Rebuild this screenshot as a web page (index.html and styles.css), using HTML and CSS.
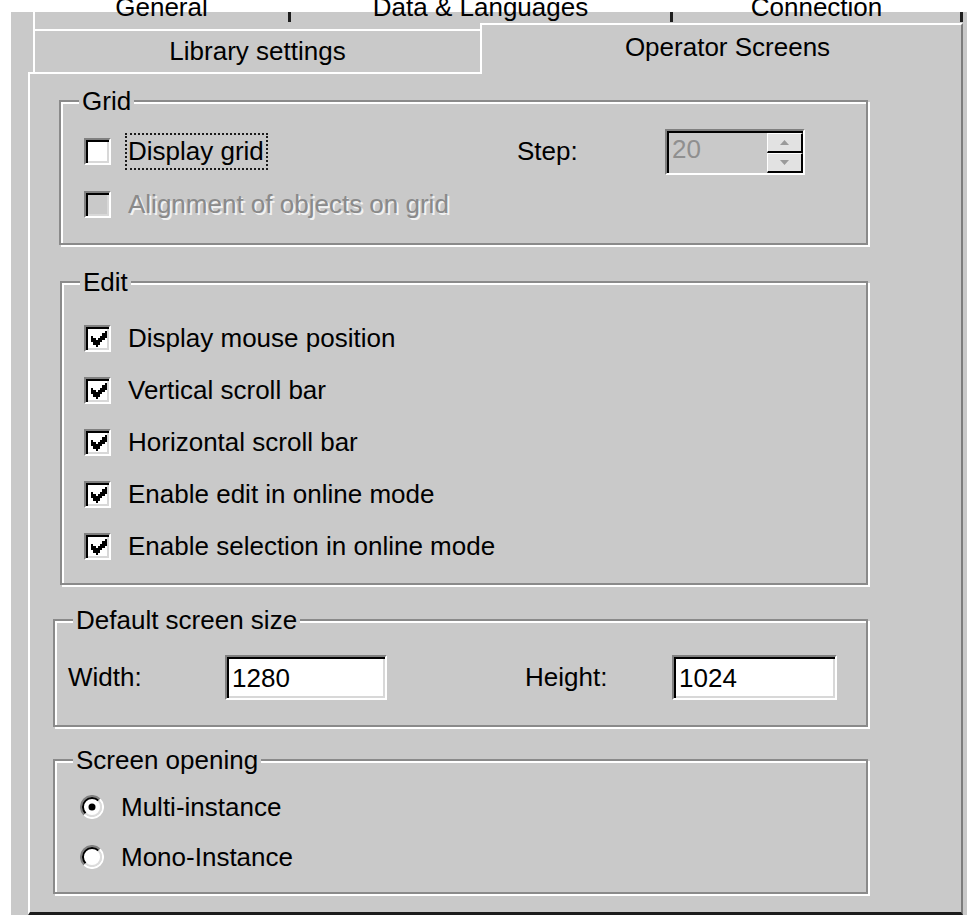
FILE: index.html
```html
<!DOCTYPE html>
<html lang="en">
<head>
<meta charset="utf-8">
<title>Options</title>
<link rel="stylesheet" href="styles.css">
</head>
<body>
<div class="dialog">
  <div class="tabs-back">
    <div class="tab-back tb-general"><span>General</span></div>
    <div class="tab-sep"></div>
    <div class="tab-back tb-data"><span>Data &amp; Languages</span></div>
    <div class="tab-sep"></div>
    <div class="tab-back tb-conn"><span>Connection</span></div>
    <div class="tab-sep"></div>
  </div>
  <div class="tabs-front">
    <div class="tab tab-lib">Library settings</div>
    <div class="tab tab-sel">Operator Screens</div>
  </div>

  <div class="panel">
    <fieldset class="group g-grid">
      <legend>Grid</legend>
      <div class="row row-53">
        <div class="opt opt-wide">
          <span class="chk"></span>
          <span class="focus">Display grid</span>
        </div>
        <span class="step-label">Step:</span>
        <div class="spin">
          <span class="spin-value">20</span>
          <span class="spin-btns">
            <span class="spin-btn"><svg width="9" height="5" viewBox="0 0 9 5"><path d="M4.5 0L9 5H0z" fill="#9a9a9a"/></svg></span>
            <span class="spin-btn"><svg width="9" height="5" viewBox="0 0 9 5"><path d="M0 0H9L4.5 5z" fill="#9a9a9a"/></svg></span>
          </span>
        </div>
      </div>
      <div class="row row-53">
        <div class="opt">
          <span class="chk chk-off"></span>
          <span class="disabled">Alignment of objects on grid</span>
        </div>
      </div>
    </fieldset>

    <fieldset class="group g-edit">
      <legend>Edit</legend>
      <div class="row row-52">
        <div class="opt"><span class="chk"><svg class="tick" width="16" height="16" viewBox="0 0 7 7" shape-rendering="crispEdges"><path d="M0 2h1v3H0zM1 3h1v3H1zM2 4h1v3H2zM3 3h1v3H3zM4 2h1v3H4zM5 1h1v3H5zM6 0h1v3H6z"/></svg></span><span>Display mouse position</span></div>
      </div>
      <div class="row row-52">
        <div class="opt"><span class="chk"><svg class="tick" width="16" height="16" viewBox="0 0 7 7" shape-rendering="crispEdges"><path d="M0 2h1v3H0zM1 3h1v3H1zM2 4h1v3H2zM3 3h1v3H3zM4 2h1v3H4zM5 1h1v3H5zM6 0h1v3H6z"/></svg></span><span>Vertical scroll bar</span></div>
      </div>
      <div class="row row-52">
        <div class="opt"><span class="chk"><svg class="tick" width="16" height="16" viewBox="0 0 7 7" shape-rendering="crispEdges"><path d="M0 2h1v3H0zM1 3h1v3H1zM2 4h1v3H2zM3 3h1v3H3zM4 2h1v3H4zM5 1h1v3H5zM6 0h1v3H6z"/></svg></span><span>Horizontal scroll bar</span></div>
      </div>
      <div class="row row-52">
        <div class="opt"><span class="chk"><svg class="tick" width="16" height="16" viewBox="0 0 7 7" shape-rendering="crispEdges"><path d="M0 2h1v3H0zM1 3h1v3H1zM2 4h1v3H2zM3 3h1v3H3zM4 2h1v3H4zM5 1h1v3H5zM6 0h1v3H6z"/></svg></span><span>Enable edit in online mode</span></div>
      </div>
      <div class="row row-52">
        <div class="opt"><span class="chk"><svg class="tick" width="16" height="16" viewBox="0 0 7 7" shape-rendering="crispEdges"><path d="M0 2h1v3H0zM1 3h1v3H1zM2 4h1v3H2zM3 3h1v3H3zM4 2h1v3H4zM5 1h1v3H5zM6 0h1v3H6z"/></svg></span><span>Enable selection in online mode</span></div>
      </div>
    </fieldset>

    <fieldset class="group g-size">
      <legend>Default screen size</legend>
      <div class="row size-row">
        <span class="lbl-width">Width:</span>
        <div class="field field-w">1280</div>
        <span class="lbl-height">Height:</span>
        <div class="field field-h">1024</div>
      </div>
    </fieldset>

    <fieldset class="group g-open">
      <legend>Screen opening</legend>
      <div class="row row-50">
        <div class="opt opt-radio">
          <svg class="radio" width="24" height="24" viewBox="0 0 24 24">
            <circle cx="12" cy="12" r="9" fill="#fff"/>
            <path d="M4.2 19.8A11 11 0 0 1 19.8 4.2" fill="none" stroke="#808080" stroke-width="2"/>
            <path d="M19.8 4.2A11 11 0 0 1 4.2 19.8" fill="none" stroke="#fff" stroke-width="2"/>
            <path d="M5.6 18.4A9 9 0 0 1 18.4 5.6" fill="none" stroke="#000" stroke-width="2"/>
            <path d="M18.4 5.6A9 9 0 0 1 5.6 18.4" fill="none" stroke="#dcdcdc" stroke-width="2"/>
            <circle cx="12" cy="12" r="3.5" fill="#000"/>
          </svg>
          <span>Multi-instance</span>
        </div>
      </div>
      <div class="row row-50">
        <div class="opt opt-radio">
          <svg class="radio" width="24" height="24" viewBox="0 0 24 24">
            <circle cx="12" cy="12" r="9" fill="#fff"/>
            <path d="M4.2 19.8A11 11 0 0 1 19.8 4.2" fill="none" stroke="#808080" stroke-width="2"/>
            <path d="M19.8 4.2A11 11 0 0 1 4.2 19.8" fill="none" stroke="#fff" stroke-width="2"/>
            <path d="M5.6 18.4A9 9 0 0 1 18.4 5.6" fill="none" stroke="#000" stroke-width="2"/>
            <path d="M18.4 5.6A9 9 0 0 1 5.6 18.4" fill="none" stroke="#dcdcdc" stroke-width="2"/>
          </svg>
          <span>Mono-Instance</span>
        </div>
      </div>
    </fieldset>
  </div>
</div>
</body>
</html>
```

FILE: styles.css
```css
* {
  box-sizing: border-box;
}

html,
body {
  margin: 0;
  background: #fff;
}

body {
  width: 967px;
  height: 915px;
  overflow: hidden;
}

.dialog {
  margin-left: 11px;
  width: 956px;
  height: 915px;
  background: #c9c9c9;
  font-family: "Liberation Sans", Arial, sans-serif;
  font-size: 26px;
  line-height: 29px;
  color: #000;
  display: flex;
  flex-direction: column;
}

/* back row of property-sheet tabs, mostly scrolled out of view */
.tabs-back {
  height: 29px;
  flex: none;
  display: flex;
  padding-left: 22px;
  background: linear-gradient(#fff 0 12px, transparent 12px);
}

.tab-back {
  height: 29px;
  overflow: hidden;
  text-align: center;
  border-left: 2px solid #fff;
}

.tab-back + .tab-sep + .tab-back {
  border-left: 0;
}

.tab-back span {
  display: block;
  margin-top: -7px;
  white-space: nowrap;
}

.tb-general { width: 255px; }
.tb-data { width: 379px; }
.tb-conn { width: 287px; }

.tab-sep {
  width: 3px;
  height: 10px;
  margin-top: 12px;
  background: #1e1e1e;
}

/* front row of tabs */
.tabs-front {
  height: 49px;
  margin-top: -6px;
  flex: none;
  display: flex;
  align-items: flex-end;
  padding-left: 22px;
}

.tab {
  background: #c9c9c9;
  border-top: 2px solid #fff;
  border-left: 2px solid #fff;
  white-space: nowrap;
}

.tab-lib {
  width: 447px;
  height: 43px;
  display: flex;
  align-items: center;
  justify-content: center;
}

.tab-sel {
  position: relative;
  z-index: 1;
  width: 483px;
  height: 51px;
  margin-bottom: -2px;
  padding: 8px 0 0 12px;
  text-align: center;
  border-right: 2px solid #7d7d7d;
}

/* page body of the selected tab */
.panel {
  flex: 1;
  margin-left: 17px;
  width: 935px;
  border-top: 2px solid #fff;
  border-left: 2px solid #fff;
  border-right: 2px solid #7d7d7d;
  border-bottom: 3px solid #1c1c1c;
}

/* etched group boxes */
.group {
  margin: 0;
  padding: 0;
  min-inline-size: 0;
  border: 2px solid #8a8a8a;
  box-shadow: inset 2px 2px 0 #fff, 2px 2px 0 #fff;
}

.group legend {
  margin-left: 18px;
  padding: 0 3px;
  line-height: 28px;
  background: #c9c9c9;
}

.g-grid {
  margin: 13px 0 0 29px;
  width: 809px;
  padding: 10px 0 12px 0;
}

.g-grid .row { padding-left: 23px; }

.g-edit {
  margin: 23px 0 0 30px;
  width: 808px;
  padding: 16px 0 11px 0;
}

.g-edit .row { padding-left: 22px; }

.g-size {
  margin: 21px 0 0 23px;
  width: 815px;
  padding: 21px 0 25px 0;
}

.g-size .row { padding-left: 13px; }

.g-open {
  margin: 19px 0 0 23px;
  width: 815px;
  padding: 8px 0 10px 0;
}

.g-open .row { padding-left: 25px; }

.row {
  display: flex;
  align-items: center;
}

.row-53 { height: 53px; }
.row-52 { height: 52px; }
.row-50 { height: 50px; }

.opt {
  display: flex;
  align-items: center;
  gap: 17px;
  white-space: nowrap;
}

.opt-wide {
  width: 433px;
}

/* classic 3D checkbox */
.chk {
  width: 27px;
  height: 27px;
  flex: none;
  display: flex;
  align-items: center;
  justify-content: center;
  background: #fff;
  border: 2px solid;
  border-color: #808080 #fff #fff #808080;
  box-shadow: inset 2px 2px 0 #000, inset -2px -2px 0 #d8d8d8;
}

.chk-off {
  background: #c9c9c9;
}

.tick {
  margin: 2px 0 0 2px;
}

.focus {
  margin-left: -3px;
  padding: 1px 2px 1px 1px;
  line-height: 31px;
  border: 2px dotted #1a1a1a;
}

.disabled {
  color: #8a8a8a;
  text-shadow: 2px 2px 0 #f2f2f2;
}

.step-label {
  width: 148px;
}

/* disabled spin edit */
.spin {
  width: 140px;
  height: 46px;
  display: flex;
  border: 2px solid;
  border-color: #808080 #fff #fff #808080;
  box-shadow: inset 2px 2px 0 #000;
}

.spin-value {
  flex: 1;
  padding: 4px 0 0 5px;
  color: #8f8f8f;
}

.spin-btns {
  width: 36px;
  display: flex;
  flex-direction: column;
  padding-top: 2px;
}

.spin-btn {
  flex: 1;
  display: flex;
  align-items: center;
  justify-content: center;
  background: #e2e2e2;
  border-style: solid;
  border-width: 1px 2px 2px 1px;
  border-color: #fff #000 #000 #fff;
}

/* text fields */
.size-row {
  height: 45px;
}

.lbl-width {
  width: 157px;
}

.lbl-height {
  width: 147px;
  margin-left: 138px;
}

.field {
  height: 45px;
  display: flex;
  align-items: center;
  padding: 2px 0 0 5px;
  background: #fff;
  border: 2px solid;
  border-color: #808080 #fff #fff #808080;
  box-shadow: inset 2px 2px 0 #000, inset -2px -2px 0 #d8d8d8;
}

.field-w { width: 162px; }
.field-h { width: 165px; }

.radio {
  flex: none;
}
```
